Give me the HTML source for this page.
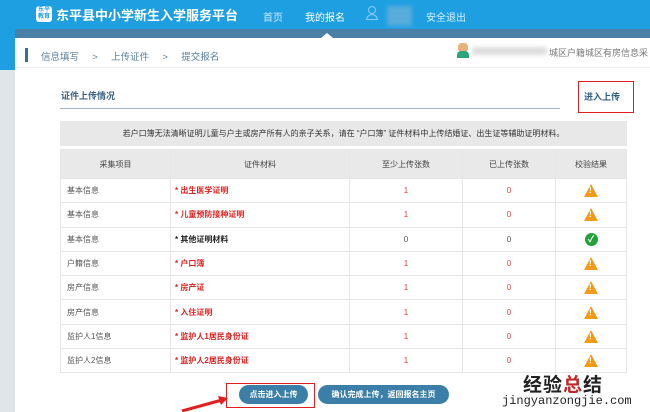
<!DOCTYPE html>
<html><head><meta charset="utf-8"><style>
*{margin:0;padding:0;box-sizing:border-box}
body{width:650px;height:412px;overflow:hidden;position:relative;background:#dfe6ea;font-family:"Liberation Sans","Noto Sans CJK SC",sans-serif;font-size:9px;color:#333}
.a{position:absolute}
.hdr{left:0;top:0;width:650px;height:29px;background:#1e9fe2}
.strip{left:15px;top:29px;width:635px;height:9px;background:#4a7fa6}
.lblue{left:0;top:29px;width:15px;height:41px;background:#1e9fe2}
.card{left:15px;top:38px;width:635px;height:374px;background:#fff}
table{position:absolute;left:60px;top:149px;width:567px;border-collapse:collapse}
td,th{border:1px solid #e6e6e6;height:24.3px;font-size:8px;font-weight:normal}
th{background:#e9e9e9;height:29px;text-align:center;color:#444}
td{text-align:center;color:#555}
td.l{text-align:left;padding-left:6px}
td.r{text-align:left;padding-left:4px;color:#e02020;font-weight:bold}
td.k{text-align:left;padding-left:4px;color:#222;font-weight:bold}
.n{color:#e04040}
.w{display:inline-block;width:0;height:0;border-left:7.5px solid transparent;border-right:7.5px solid transparent;border-bottom:13px solid #f29a1a;position:relative;vertical-align:middle}
.w:after{content:"!";position:absolute;left:-2px;top:2px;color:#fff;font-size:8px;font-weight:bold}
.ok{display:inline-block;width:13px;height:13px;border-radius:50%;background:#22a13a;color:#fff;font-size:9px;line-height:13px;vertical-align:middle;font-weight:bold}
.btn{background:#3b7fa8;color:#fff;border-radius:10px;text-align:center;line-height:19px;font-size:8px;font-weight:bold}
</style></head><body>
<div class="a hdr"></div>
<div class="a lblue"></div>
<div class="a strip"></div>
<div class="a card"></div>
<div class="a" style="left:36px;top:6px;width:16px;height:16px;background:#fff;border-radius:3px;color:#1e9fe2;font-size:6px;line-height:7px;text-align:center;font-weight:bold;padding-top:1px">东平<br>教育</div>
<div class="a" style="left:56px;top:5px;color:#fff;font-size:13px;font-weight:bold">东平县中小学新生入学服务平台</div>
<div class="a" style="left:263px;top:9px;color:#cfe9f8;font-size:10px">首页</div>
<div class="a" style="left:305px;top:9px;color:#fff;font-size:10px">我的报名</div>
<div class="a" style="left:321px;top:33px;width:0;height:0;border-left:6px solid transparent;border-right:6px solid transparent;border-bottom:5px solid #fff"></div>
<div class="a" style="left:368px;top:6px;width:8px;height:8px;border:1px solid #8ccaf0;border-radius:50%"></div>
<div class="a" style="left:366px;top:14px;width:12px;height:6px;border:1px solid #8ccaf0;border-radius:6px 6px 0 0"></div>
<div class="a" style="left:387px;top:6px;width:25px;height:20px;background:#7fb6d8;opacity:.6;filter:blur(2px)"></div>
<div class="a" style="left:426px;top:9px;color:#d8eefa;font-size:10px">安全退出</div>
<div class="a" style="left:25px;top:48px;width:3px;height:14px;background:#3a6f95"></div>
<div class="a" style="left:41px;top:49px;color:#5a7f9a;font-size:9.5px;word-spacing:4px">信息填写 &nbsp;&gt;&nbsp; 上传证件 &nbsp;&gt;&nbsp; 提交报名</div>
<div class="a" style="left:458px;top:43px;width:10px;height:8px;background:#e8b07a;border-radius:4px 4px 2px 2px"></div>
<div class="a" style="left:457px;top:51px;width:12px;height:7px;background:#2aa57b;border-radius:4px 4px 0 0"></div>
<div class="a" style="left:472px;top:47px;width:75px;height:8px;background:#ddd;filter:blur(2px)"></div>
<div class="a" style="left:549px;top:46px;color:#777;font-size:9px;white-space:nowrap">城区户籍城区有房信息采</div>
<div class="a" style="left:15px;top:67px;width:635px;height:1px;background:#eceff1"></div>
<div class="a" style="left:61px;top:89px;color:#3a5f80;font-size:9px;font-weight:bold">证件上传情况</div>
<div class="a" style="left:60px;top:108px;width:500px;height:1px;background:#9fb4c4"></div>
<div class="a" style="left:578px;top:81px;width:56px;height:32px;border:1.5px solid #e02020"></div>
<div class="a" style="left:584px;top:90px;color:#2e5d85;font-size:9px;font-weight:bold">进入上传</div>
<div class="a" style="left:60px;top:121px;width:567px;height:25px;background:#e8e8e8;text-align:center;line-height:25px;font-size:8px;color:#333">若户口簿无法清晰证明儿童与户主或房产所有人的亲子关系，请在 “户口簿” 证件材料中上传结婚证、出生证等辅助证明材料。</div>
<table>
<tr><th style="width:110px">采集项目</th><th style="width:179px">证件材料</th><th style="width:113px">至少上传张数</th><th style="width:93px">已上传张数</th><th>校验结果</th></tr>
<tr><td class="l">基本信息</td><td class="r">* 出生医学证明</td><td class="n">1</td><td class="n">0</td><td><span class="w"></span></td></tr>
<tr><td class="l">基本信息</td><td class="r">* 儿童预防接种证明</td><td class="n">1</td><td class="n">0</td><td><span class="w"></span></td></tr>
<tr><td class="l">基本信息</td><td class="k">* 其他证明材料</td><td>0</td><td>0</td><td><span class="ok">✓</span></td></tr>
<tr><td class="l">户籍信息</td><td class="r">* 户口簿</td><td class="n">1</td><td class="n">0</td><td><span class="w"></span></td></tr>
<tr><td class="l">房产信息</td><td class="r">* 房产证</td><td class="n">1</td><td class="n">0</td><td><span class="w"></span></td></tr>
<tr><td class="l">房产信息</td><td class="r">* 入住证明</td><td class="n">1</td><td class="n">0</td><td><span class="w"></span></td></tr>
<tr><td class="l">监护人1信息</td><td class="r">* 监护人1居民身份证</td><td class="n">1</td><td class="n">0</td><td><span class="w"></span></td></tr>
<tr><td class="l">监护人2信息</td><td class="r">* 监护人2居民身份证</td><td class="n">1</td><td class="n">0</td><td><span class="w"></span></td></tr>
</table>
<div class="a btn" style="left:239px;top:385px;width:69px;height:19px">点击进入上传</div>
<div class="a btn" style="left:318px;top:385px;width:131px;height:19px">确认完成上传，返回报名主页</div>
<div class="a" style="left:226px;top:383px;width:89px;height:25px;border:1.5px solid #e02020"></div>
<svg class="a" style="left:180px;top:395px" width="50" height="17"><line x1="2" y1="16" x2="42" y2="5" stroke="#e02020" stroke-width="3"/><polygon points="48,3 38,1 41,10" fill="#e02020"/></svg>
<div class="a" style="left:523px;top:370px;font-size:19px;font-weight:bold;color:#222;letter-spacing:1px">经验<span style="color:#c0282a">总</span>结</div>
<div class="a" style="left:502px;top:394px;font-family:'Liberation Mono',monospace;font-size:12px;color:#222">jingyanzongjie.com</div>
</body></html>
